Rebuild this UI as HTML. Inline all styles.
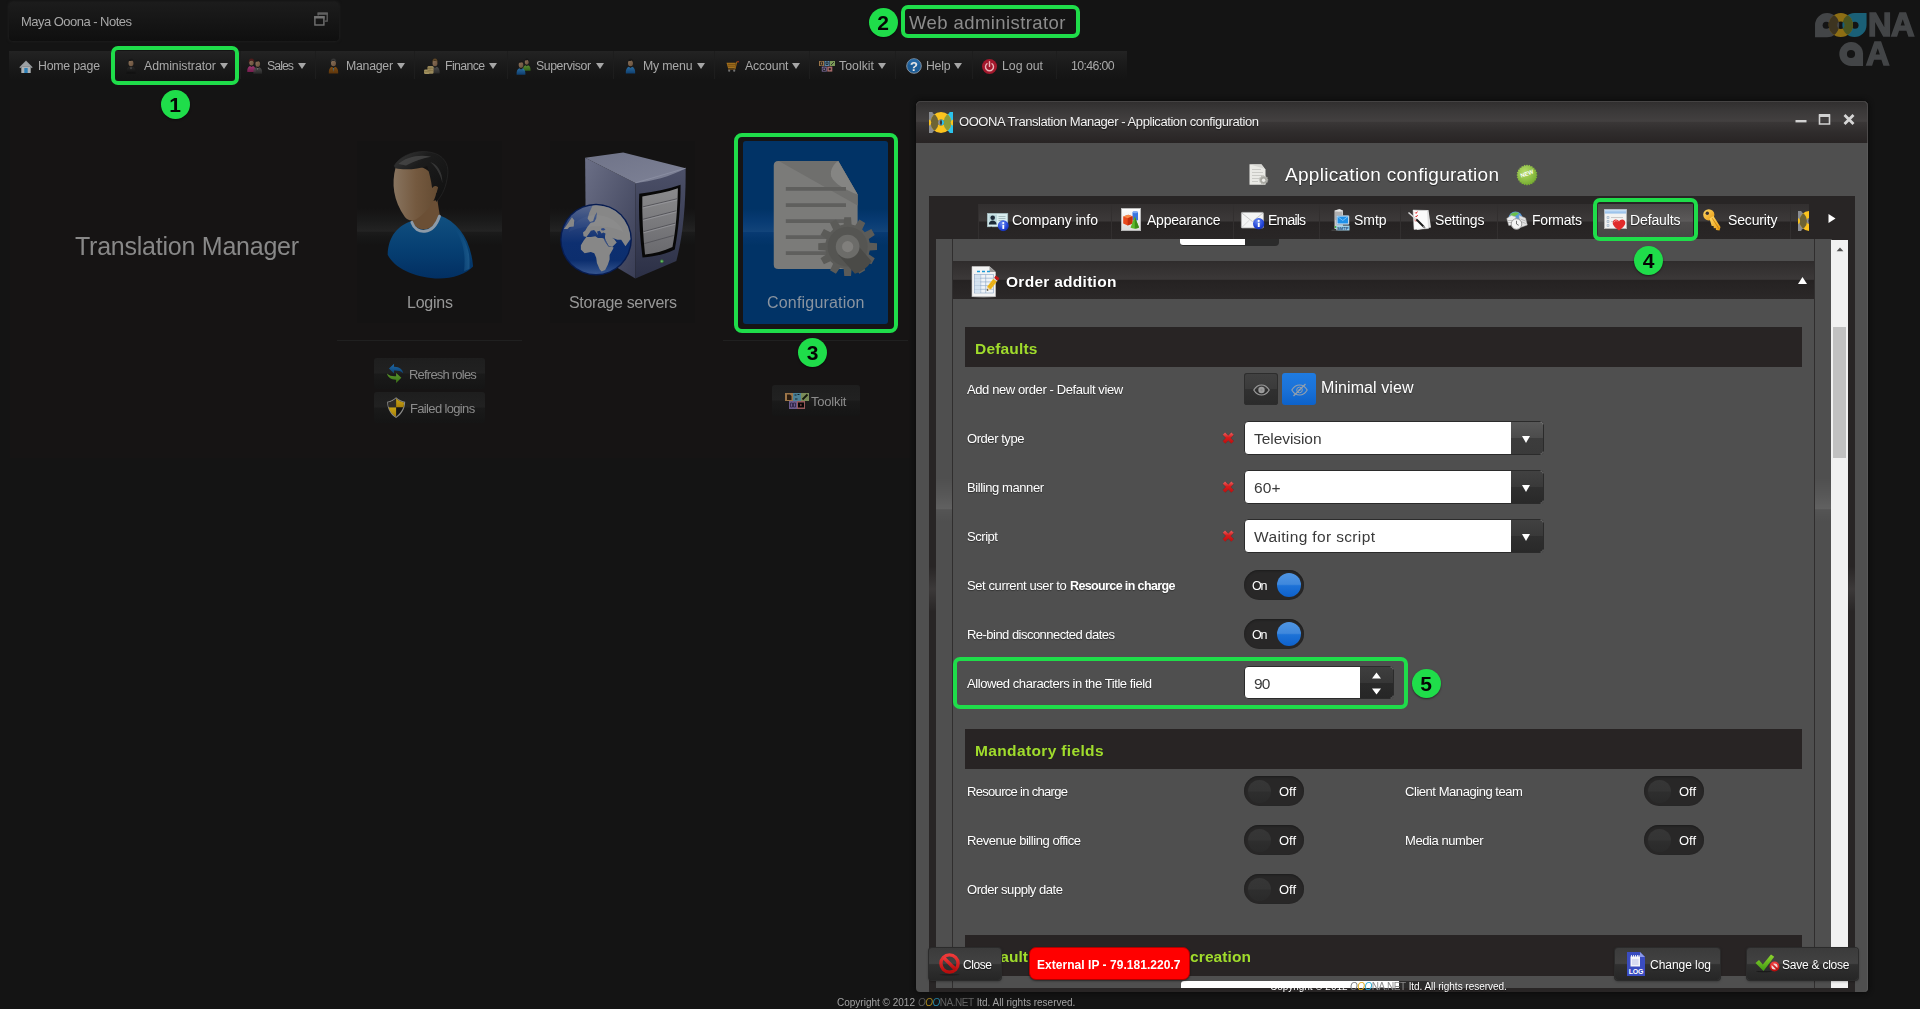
<!DOCTYPE html>
<html lang="en">
<head>
<meta charset="utf-8">
<title>Web administrator</title>
<style>
*{box-sizing:border-box;margin:0;padding:0}
html,body{width:1920px;height:1009px;overflow:hidden;background:#141414}
body{position:relative;font-family:"Liberation Sans",sans-serif}
.a,.tx,svg.i{position:absolute}
.a{z-index:1}
svg.i{z-index:4;overflow:visible}
svg.dm{opacity:.8}
.tx{white-space:pre;line-height:1;z-index:5;will-change:transform}
.hl{position:absolute;border:4px solid #1fdd4a;border-radius:7px;z-index:40}
.bd{position:absolute;width:29px;height:29px;border-radius:50%;background:#1fdd4a;color:#050505;font-weight:bold;font-size:21px;line-height:29px;text-align:center;z-index:41;box-shadow:0 1px 2px rgba(0,0,0,.5)}
.msep{position:absolute;top:51px;width:1px;height:28px;background:#1d1d1d;z-index:2}
.arr{position:absolute;top:63px;width:0;height:0;border-left:4px solid transparent;border-right:4px solid transparent;border-top:6.5px solid #a6a6a6;z-index:5}
.tile{position:absolute;top:141px;width:145px;height:182px;z-index:2;background:linear-gradient(#141313 0%,#141313 37%,#1b1b1b 44%,#232323 49.6%,#1b1b1b 50%,#171717 53%,#141313 57%,#141313 100%)}
.hr{position:absolute;height:1px;background:#202020;z-index:2}
.sb{position:absolute;background:linear-gradient(#1e1e1e 0%,#212121 48%,#1a1a1a 52%,#171717 80%,#151515 100%);border-radius:3px;z-index:2}
.tab{position:absolute;top:204px;height:35px;z-index:3;background:linear-gradient(#322f2f 0%,#3c3939 49%,#262323 51%,#292626 100%);border-left:1px solid #322f2f;border-right:1px solid #1f1d1d}
.sech{position:absolute;left:965px;width:837px;background:#282424;z-index:2}
.dd{position:absolute;left:1244px;width:300px;height:34px;border-radius:4px;background:#fff;border:1px solid #2b2b2b;overflow:hidden;z-index:3}
.dd i{position:absolute;right:0;top:0;width:32px;height:32px;background:linear-gradient(#414141,#393939 49%,#2f2f2f 51%,#292929)}
.dd i:after{content:"";position:absolute;left:11px;top:14px;border-left:4.5px solid transparent;border-right:4.5px solid transparent;border-top:7px solid #fff}
.dd.sp i:after{display:none}
.tg{position:absolute;width:60px;height:30px;border-radius:15px;background:#282727;z-index:3;box-shadow:inset 0 1px 2px #1c1c1c}
.tg b{position:absolute;top:3px;width:24px;height:24px;border-radius:50%}
.tg.on b{left:33px;background:linear-gradient(#4f95e3 0%,#3f88dc 47%,#1d72d7 53%,#0e61cb 100%)}
.tg.off b{left:4px;top:3.5px;width:23px;height:23px;background:linear-gradient(#363636 0%,#343434 49%,#2e2e2e 51%,#2a2a2a 100%)}
.btn{position:absolute;top:948px;height:32px;border-radius:3px;background:linear-gradient(#3b3b3b,#424242 48%,#303030 52%,#262626);box-shadow:0 0 0 1px #2b2b2b,0 1px 3px rgba(0,0,0,.5);z-index:30}
</style>
</head>

<body>
<!-- NOTES -->
<div class="a" style="left:9px;top:2px;width:330px;height:39px;border-radius:4px;background:linear-gradient(#1c1c1c,#151515 55%,#0f0f0f);box-shadow:0 0 3px #262626"></div>
<svg class="i" style="left:314px;top:12px" width="14" height="14" viewBox="0 0 14 14"><path d="M4.200 3.500V1.200h9v8h-2.400" fill="none" stroke="#606060" stroke-width="1.300"/><rect x="3.600" y="0.600" width="10.200" height="2.200" fill="#606060"/><rect x="0.900" y="4.800" width="9" height="8.200" fill="none" stroke="#727272" stroke-width="1.400"/><rect x="0.200" y="4.100" width="10.400" height="2.400" fill="#727272"/></svg>
<!-- MENU BAR -->
<div class="a" style="left:9px;top:51px;width:1118px;height:28px;background:linear-gradient(#232323,#1a1a1a 50%,#141414)"></div>
<i class="msep" style="left:240px"></i><i class="msep" style="left:315px"></i><i class="msep" style="left:414px"></i><i class="msep" style="left:507px"></i><i class="msep" style="left:613px"></i><i class="msep" style="left:714px"></i><i class="msep" style="left:809px"></i><i class="msep" style="left:895px"></i><i class="msep" style="left:972px"></i><i class="msep" style="left:1056px"></i><i class="msep" style="left:111px"></i>
<i class="arr" style="left:219.5px"></i><i class="arr" style="left:297.5px"></i><i class="arr" style="left:396.5px"></i><i class="arr" style="left:488.5px"></i><i class="arr" style="left:595.5px"></i><i class="arr" style="left:696.5px"></i><i class="arr" style="left:791.5px"></i><i class="arr" style="left:878px"></i><i class="arr" style="left:954px"></i>
<!-- MAIN PANEL -->
<div class="a" style="left:10px;top:100px;width:900px;height:358px;background:#161414"></div>
<div class="tile" style="left:357px"></div>
<div class="tile" style="left:550px"></div>
<div class="tile" style="left:743px;width:145px;height:183px;border-radius:3px;background:linear-gradient(#013366 0%,#013366 37%,#083b73 44%,#12447a 49.6%,#083a72 50%,#04366c 53%,#013366 57%,#013366 100%)"></div>
<i class="hr" style="left:337px;top:340px;width:185px"></i>
<i class="hr" style="left:723px;top:340px;width:185px"></i>
<div class="sb" style="left:374px;top:358px;width:111px;height:31px"></div>
<div class="sb" style="left:374px;top:392px;width:111px;height:31px"></div>
<div class="sb" style="left:772px;top:385px;width:88px;height:31px"></div>
<!-- HIGHLIGHTS -->
<div class="hl" style="left:111px;top:46px;width:128px;height:39px"></div>
<div class="bd" style="left:160.5px;top:89.5px">1</div>
<div class="hl" style="left:901px;top:5px;width:179px;height:33px"></div>
<div class="bd" style="left:868.5px;top:7.5px">2</div>
<div class="hl" style="left:734px;top:133px;width:164px;height:200px;border-radius:8px"></div>
<div class="bd" style="left:798px;top:338px">3</div>
<div class="hl" style="left:1593px;top:198px;width:105px;height:43px"></div>
<div class="bd" style="left:1634px;top:246px">4</div>
<div class="hl" style="left:953px;top:657px;width:455px;height:52px"></div>
<div class="bd" style="left:1411.5px;top:668.5px">5</div>

<!-- shared defs -->
<svg width="0" height="0" style="position:absolute">
<defs>
<linearGradient id="gSkin" x1="0" y1="0" x2="1" y2="1"><stop offset="0" stop-color="#a98a6c"/><stop offset="1" stop-color="#7c5d43"/></linearGradient>
<linearGradient id="gBlue" x1="0" y1="0" x2="0" y2="1"><stop offset="0" stop-color="#2f7fc0"/><stop offset="1" stop-color="#0d4a86"/></linearGradient>
<linearGradient id="gGreen" x1="0" y1="0" x2="0" y2="1"><stop offset="0" stop-color="#6aa83a"/><stop offset="1" stop-color="#3a7418"/></linearGradient>
<linearGradient id="gSuit" x1="0" y1="0" x2="0" y2="1"><stop offset="0" stop-color="#5a5a5a"/><stop offset="1" stop-color="#2c2c2c"/></linearGradient>
<linearGradient id="gDark" x1="0" y1="0" x2="0" y2="1"><stop offset="0" stop-color="#2c2c2c"/><stop offset="1" stop-color="#0c0c0c"/></linearGradient>
<linearGradient id="gPink" x1="0" y1="0" x2="0" y2="1"><stop offset="0" stop-color="#c0408a"/><stop offset="1" stop-color="#8a1c58"/></linearGradient>
<linearGradient id="gBrown" x1="0" y1="0" x2="0" y2="1"><stop offset="0" stop-color="#9a5c14"/><stop offset="1" stop-color="#6e3c08"/></linearGradient>
<!-- small person 12x16 : body uses currentColor via fill attr on use -->
<symbol id="pBody" viewBox="0 0 10 16"><path d="M0.300 15.600c-.300-3.800 1-6.200 3-6.800L5 10l1.700-1.200c2 .6 3.300 3 3 6.800z"/></symbol>
<symbol id="pHead" viewBox="0 0 10 16"><ellipse cx="5" cy="5" rx="2.500" ry="3.300" fill="url(#gSkin)"/><path d="M2.400 4.800c-.400-2.400.700-4.100 2.700-4.100 2 0 3 1.700 2.600 4.200-.300-1.200-.800-2-1.400-2.400-1.200.500-2.600.600-3.400.400-.200.500-.400 1.100-.500 1.900z" fill="#161616"/></symbol>
</defs>
</svg>
<!-- Home -->
<svg class="i" style="left:19px;top:59.5px" width="14" height="14" viewBox="0 0 14 14"><path d="M2.300 6.500h9.400v6.500H2.300z" fill="#aeb2b4"/><path d="M7 0.600L0.300 7.200l1 1L7 2.800l5.700 5.400 1-1z" fill="#8d9194"/><path d="M7 1.500L1.500 6.800h11z" fill="#9da1a4"/><rect x="5.300" y="8" width="3.400" height="5" fill="#2d7fb6"/></svg>
<!-- Administrator -->
<svg class="i dm" style="left:126px;top:57.500px" width="10" height="16"><use href="#pBody" fill="url(#gDark)"/><use href="#pHead"/><path d="M4.400 9.600L5 11.500l.6-1.900z" fill="#aaa"/></svg>
<!-- Sales -->
<svg class="i dm" style="left:246.500px;top:57.500px" width="9" height="14.500"><use href="#pBody" fill="url(#gPink)" width="9" height="14.500"/><use href="#pHead" width="9" height="14.500"/><path d="M1.800 5c-.500-2.800.600-4.600 2.700-4.600s3.200 1.800 2.700 4.600c-.300-1.400-1.300-2.500-2.700-2.500S2.100 3.600 1.800 5z" fill="#5c1c1c"/></svg>
<svg class="i dm" style="left:253px;top:59px" width="9.500" height="15"><use href="#pBody" fill="url(#gSuit)" width="9.500" height="15"/><use href="#pHead" width="9.500" height="15"/><path d="M4.200 9.200l.55 1.800.55-1.800z" fill="#bbb"/></svg>
<!-- Manager -->
<svg class="i dm" style="left:327.500px;top:57.500px" width="11" height="16"><use href="#pBody" fill="url(#gBrown)" width="11" height="16"/><use href="#pHead" width="11" height="16"/><path d="M5 10l.5 4 .5-4z" fill="#3a8ac0"/><path d="M2.700 4.800c-.400-2.500.800-4.200 2.800-4.200s3.200 1.700 2.800 4.200c-.500-1.600-1.500-2.400-2.800-2.400s-2.300.8-2.800 2.400z" fill="#3c3c3c"/></svg>
<!-- Finance -->
<svg class="i dm" style="left:430px;top:57.500px" width="10" height="16"><use href="#pBody" fill="url(#gSuit)"/><use href="#pHead"/><path d="M2.500 4.800c-.400-2.500.700-4.200 2.500-4.200s2.900 1.700 2.500 4.200c-.400-1.500-1.300-2.200-2.500-2.200s-2.100.7-2.500 2.200z" fill="#70522a"/></svg>
<svg class="i dm" style="left:423.500px;top:65.500px" width="10" height="8" viewBox="0 0 10 8"><rect x="3.500" y="0" width="6" height="7.800" rx="1.200" fill="#b5a068"/><rect x="0" y="3.600" width="5.500" height="4.400" rx="1.200" fill="#c9b474"/><path d="M3.500 2.300h6M3.500 4.600h6M0 5.800h5.500" stroke="#8a7640" stroke-width=".6"/></svg>
<!-- Supervisor -->
<svg class="i dm" style="left:522px;top:58px" width="9.500" height="13"><use href="#pBody" fill="url(#gGreen)" width="9.500" height="13"/><use href="#pHead" width="9.500" height="13"/></svg>
<svg class="i dm" style="left:516px;top:59.500px" width="10" height="15"><use href="#pBody" fill="url(#gBlue)" width="10" height="15"/><use href="#pHead" width="10" height="15"/></svg>
<!-- My menu -->
<svg class="i dm" style="left:625px;top:58px" width="11" height="16"><use href="#pBody" fill="url(#gBlue)" width="11" height="16"/><use href="#pHead" width="11" height="16"/></svg>
<!-- Account (cart) -->
<svg class="i dm" style="left:725.500px;top:60.500px" width="13" height="11" viewBox="0 0 13 11"><path d="M0.500 1.800h9.300L8.800 7H2z" fill="#c9881f"/><path d="M1.600 3.400h7.600M1.900 5.200h7" stroke="#7a4e0c" stroke-width=".7"/><path d="M12.500 0.500l-1.800.6L9 8H2" fill="none" stroke="#b57414" stroke-width="1.100"/><circle cx="3.200" cy="9.700" r="1.100" fill="#8a8a8a"/><circle cx="8.200" cy="9.700" r="1.100" fill="#8a8a8a"/><circle cx="12.200" cy="0.700" r=".8" fill="#c0281c"/></svg>
<!-- Toolkit -->
<svg class="i" style="left:819px;top:60.500px" width="16" height="11" viewBox="0 0 16 11"><rect x="0" y="0" width="5" height="5" fill="#9a7448"/><rect x="5.500" y="0" width="5" height="5" fill="#5a88a8"/><rect x="11" y="0" width="5" height="5" fill="#7c9a58"/><rect x="2.800" y="5.600" width="5" height="5" fill="#7a6a98"/><rect x="8.300" y="5.600" width="5" height="5" fill="#a86a6a"/><path d="M1.500 1h2v3h-2zM7 1h2v2.500H7zM12 4l3-3M4 7h2.500v2.500H4z" fill="none" stroke="#1c1c1c" stroke-width=".8"/><path d="M10.800 6.800l1.400 1.300-1.400 1.300-1.400-1.300z" fill="#1c1c1c"/></svg>
<!-- Help -->
<svg class="i" style="left:906px;top:58px" width="16" height="16" viewBox="0 0 16 16"><circle cx="8" cy="8" r="7.300" fill="#1c5c96" stroke="#8e9aa6" stroke-width=".9"/><path d="M1.800 6a6.300 6.300 0 0 1 12.400 0c-3 1.500-9.400 1.500-12.400 0z" fill="#2a6eae" opacity=".6"/></svg>
<span class="tx" style="left:910px;top:59.500px;font-size:13px;font-weight:bold;color:#e6e6e6;z-index:6">?</span>
<!-- Log out -->
<svg class="i" style="left:982px;top:58.500px" width="15" height="15" viewBox="0 0 15 15"><circle cx="7.500" cy="7.500" r="7.500" fill="#a2182c"/><path d="M5 4.700a4 4 0 1 0 5 0" fill="none" stroke="#e8b4b8" stroke-width="1.400" stroke-linecap="round"/><path d="M7.500 2.800v4.600" stroke="#e8b4b8" stroke-width="1.400" stroke-linecap="round"/></svg>
<!-- BIG USER ICON -->
<svg class="i" style="left:350px;top:135px;z-index:3" width="160" height="195" viewBox="0 0 828 1009">
<defs>
<linearGradient id="uB" x1="0" y1="0" x2="0" y2="1"><stop offset="0" stop-color="#115080"/><stop offset=".55" stop-color="#063f72"/><stop offset="1" stop-color="#022f62"/></linearGradient>
<linearGradient id="uF" x1="0" y1="0" x2="1" y2="0"><stop offset="0" stop-color="#88745f"/><stop offset=".5" stop-color="#74593f"/><stop offset="1" stop-color="#634a31"/></linearGradient>
<linearGradient id="uH" x1="0" y1="0" x2="1" y2="1"><stop offset="0" stop-color="#3a3a3a"/><stop offset=".35" stop-color="#1c1c1c"/><stop offset="1" stop-color="#101010"/></linearGradient>
<linearGradient id="uR" x1="0" y1="0" x2="1" y2="0"><stop offset="0" stop-color="#0a4a80" stop-opacity="0"/><stop offset=".9" stop-color="#2a6c9c" stop-opacity=".55"/><stop offset="1" stop-color="#0a4070" stop-opacity="0"/></linearGradient>
</defs>
<path d="M195 620C198 520 250 470 318 445C345 505 425 510 462 415C560 450 625 540 637 680C600 720 520 747 440 742C330 735 230 690 195 620Z" fill="url(#uB)"/>
<path d="M530 470C590 510 620 590 625 690L590 705C600 610 585 540 530 470Z" fill="url(#uR)"/>
<path d="M316 438L335 370L452 335L464 412C430 512 342 506 316 438Z" fill="#6b4f35"/>
<path d="M320 452C342 518 430 520 463 420" fill="none" stroke="#8c9aa8" stroke-width="15" stroke-linecap="round"/>
<path d="M236 168C214 250 224 340 284 424C300 446 332 446 352 430C402 395 440 342 446 302C466 292 466 255 441 255C430 200 400 164 330 158Z" fill="url(#uF)"/>
<path d="M228 160C258 104 350 72 420 90C484 102 512 150 506 202C500 262 480 312 446 346C440 322 450 292 456 270C440 258 430 268 425 276C420 230 408 192 400 160C350 178 280 182 234 172Z" fill="url(#uH)"/><path d="M250 150C290 112 360 98 420 112C380 118 330 134 290 158Z" fill="#4a4a4a" opacity=".75"/><path d="M415 140C450 150 480 190 478 250C470 210 450 170 415 140Z" fill="#3c3c3c" opacity=".8"/><path d="M228 160C258 104 350 72 420 90C484 102 512 150 506 202C500 262 480 312 446 346" fill="none" stroke="#2c2c2c" stroke-width="3"/>
</svg>
<!-- BIG SERVER ICON -->
<svg class="i" style="left:543px;top:135px;z-index:3" width="160" height="195" viewBox="0 0 828 1009">
<defs>
<linearGradient id="sL" x1="0" y1="0" x2="1" y2="1"><stop offset="0" stop-color="#6b6f86"/><stop offset="1" stop-color="#3a3e56"/></linearGradient>
<linearGradient id="sF" x1="0" y1="0" x2="0" y2="1"><stop offset="0" stop-color="#4c5068"/><stop offset="1" stop-color="#2c3046"/></linearGradient>
<linearGradient id="sT" x1="0" y1="0" x2="1" y2="1"><stop offset="0" stop-color="#6f7388"/><stop offset="1" stop-color="#7e8296"/></linearGradient>
<linearGradient id="sBay" x1="0" y1="0" x2="0" y2="1"><stop offset="0" stop-color="#8a8a8c"/><stop offset="1" stop-color="#6a6a6e"/></linearGradient>
<radialGradient id="gl" cx=".45" cy=".3" r=".75"><stop offset="0" stop-color="#3a62a8"/><stop offset=".55" stop-color="#12357e"/><stop offset="1" stop-color="#06205c"/></radialGradient>
<clipPath id="glc"><circle cx="275" cy="542" r="176"/></clipPath>
</defs>
<path d="M218 118L478 248L478 742L222 590Z" fill="url(#sL)"/>
<path d="M478 248L738 172C740 350 725 520 690 652L478 742Z" fill="url(#sF)"/>
<path d="M218 118L415 90L738 172C660 215 560 240 478 248Z" fill="url(#sT)"/>
<path d="M478 248L738 172" stroke="#8a8ea2" stroke-width="5" fill="none"/>
<path d="M498 304C570 296 650 280 712 258C712 380 700 500 682 592C630 618 570 630 515 634C500 520 494 410 498 304Z" fill="#080808"/>
<path d="M514 318C580 308 640 296 698 276C696 380 688 490 670 580C625 602 575 614 528 618C518 520 512 420 514 318Z" fill="url(#sBay)"/>
<path d="M516 372L694 330M518 436L690 392M520 500L684 456M524 562L676 520" stroke="#55555a" stroke-width="5" fill="none"/>
<path d="M516 378L694 336M518 442L690 398M520 506L684 462" stroke="#a2a2a6" stroke-width="3" fill="none"/>
<circle cx="615" cy="653" r="9" fill="#3c8a3c"/><circle cx="615" cy="653" r="4" fill="#7cc47c"/>
<g transform="translate(62.100 310.500) scale(.4616)">
<defs>
<linearGradient id="gSea" x1="0" y1="0" x2="0" y2="1"><stop offset="0" stop-color="#56668c"/><stop offset=".3" stop-color="#27427c"/><stop offset=".55" stop-color="#0d2f70"/><stop offset=".8" stop-color="#0c2e6e"/><stop offset="1" stop-color="#34548e"/></linearGradient>
<clipPath id="gClip"><circle cx="460" cy="500" r="386"/></clipPath>
</defs>
<circle cx="460" cy="500" r="402" fill="#071c50"/>
<circle cx="460" cy="500" r="386" fill="url(#gSea)"/>
<g clip-path="url(#gClip)" fill="#878787">
<path d="M420 120L385 195 365 262 392 302 428 292 446 232 472 190 462 262 440 302 400 312 362 358 340 398 314 420 320 462 352 470 382 432 402 402 438 392 456 412 482 452 472 410 502 402 522 432 542 420 566 432 560 462 562 492 600 572 642 582 692 532 662 492 640 480 700 502 742 502 790 575 842 500 1000 500 1000 0 420 0Z"/>
<path d="M352 472L320 512 290 562 290 612 332 652 402 640 440 652 462 702 470 762 500 832 522 858 562 842 592 782 612 722 612 672 652 602 656 586 600 576 572 522 556 492 530 482 482 482 452 462 402 472Z"/>
<path d="M98 382L130 340 190 250 216 282 210 352 162 360 140 382Z"/>
</g>
<g clip-path="url(#gClip)" fill="#2a4684"><path d="M516 378L540 370 566 384 548 398 520 394Z"/><path d="M548 492L560 520 590 566 604 574 596 560 570 520 558 490Z"/></g>
<path d="M150 420A330 300 0 0 1 770 420C640 330 280 330 150 420Z" fill="#fff" opacity=".035" clip-path="url(#gClip)"/>
</g>
</svg>
<!-- BIG CONFIG ICON -->
<svg class="i" style="left:730px;top:128px;z-index:3" width="172" height="210" viewBox="0 0 826 1009">
<path d="M232 158H520L613 320V656Q613 678 591 678H232Q210 678 210 656V180Q210 158 232 158Z" fill="#7b7b79"/>
<path d="M232 158H520L613 320V372L236 160Z" fill="#6f6f6d"/>
<path d="M520 158L613 320C560 300 500 270 486 232C478 200 500 170 520 158Z" fill="#858583"/>
<path d="M268 293H557M268 370H557M268 447H557M268 524H470M268 601H470" stroke="#5f5f5d" stroke-width="18"/>
<path d="M671.3 550.9L706.1 553.7L706.1 586.3L671.3 589.1L666.6 606.6L695.3 626.4L679.0 654.7L647.5 639.7L634.7 652.5L649.7 684.0L621.4 700.3L601.6 671.6L584.1 676.3L581.3 711.1L548.7 711.1L545.9 676.3L528.4 671.6L508.6 700.3L480.3 684.0L495.3 652.5L482.5 639.7L451.0 654.7L434.7 626.4L463.4 606.6L458.7 589.1L423.9 586.3L423.9 553.7L458.7 550.9L463.4 533.4L434.7 513.6L451.0 485.3L482.5 500.3L495.3 487.5L480.3 456.0L508.6 439.7L528.4 468.4L545.9 463.7L548.7 428.9L581.3 428.9L584.1 463.7L601.6 468.4L621.4 439.7L649.7 456.0L634.7 487.5L647.5 500.3L679.0 485.3L695.3 513.6L666.6 533.4Z" fill="#5b5b58"/>
<circle cx="565" cy="570" r="96" fill="#555552"/>
<path d="M520 610L600 700A142 142 0 0 0 680 640L610 560Z" fill="#4a4a47"/>
<circle cx="565" cy="570" r="57" fill="#6c6c69"/>
<circle cx="565" cy="570" r="27" fill="#807f7c"/>
</svg>
<!-- SMALL BUTTON ICONS -->
<svg class="i" style="left:360px;top:350px;z-index:3" width="140" height="80" viewBox="0 0 1766 1009">
<defs>
<linearGradient id="rB" x1="0" y1="0" x2="0" y2="1"><stop offset="0" stop-color="#1f6aa8"/><stop offset="1" stop-color="#0c4274"/></linearGradient>
<linearGradient id="rG" x1="0" y1="0" x2="0" y2="1"><stop offset="0" stop-color="#5a9a2c"/><stop offset="1" stop-color="#3a7018"/></linearGradient>
<linearGradient id="shY" x1="0" y1="0" x2="0" y2="1"><stop offset="0" stop-color="#c9a416"/><stop offset="1" stop-color="#a8800a"/></linearGradient>
</defs>
<path d="M365 232L430 172L428 212C500 210 540 250 545 292C515 262 480 256 428 258L430 296Z" fill="url(#rB)"/>
<path d="M522 350L455 415L456 374C395 376 350 345 340 296C372 326 410 334 456 330L455 290Z" fill="url(#rG)"/>
<path d="M455 596C420 630 380 648 342 652C345 740 380 810 455 858C530 810 568 740 570 652C530 648 492 630 455 596Z" fill="#8a8a88"/>
<path d="M455 612C424 640 390 656 356 662C358 716 372 768 455 842Z" fill="#2a2a2a"/>
<path d="M455 612C486 640 522 656 556 662C554 716 540 768 455 842Z" fill="#141414"/>
<path d="M455 612C486 640 522 656 556 662C556 684 552 704 548 722H455Z" fill="url(#shY)"/>
<path d="M455 722H362C374 770 400 810 455 842Z" fill="url(#shY)"/>
<path d="M455 612C424 640 390 656 356 662C356 684 358 704 362 722H455Z" fill="#2e2c28"/>
</svg>
<svg class="i" style="left:785px;top:393px;z-index:3" width="24" height="16" viewBox="0 0 24 16">
<rect x="0" y="0" width="8" height="8" fill="#9c7548"/><rect x="8" y="0" width="8" height="8" fill="#4b8196"/><rect x="16" y="0" width="8" height="8" fill="#7a8c58"/><rect x="4" y="8" width="8" height="8" fill="#6c5c8c"/><rect x="12" y="8" width="8" height="8" fill="#96595a"/>
<path d="M2 1.500h3l1.500 1.500v4H2z" fill="#2a1c10"/><path d="M9.500 2h2M12.500 1.500h2M10 6h2.500" stroke="#10222a" stroke-width="1.200"/><path d="M17.500 6.500l5-5" stroke="#14180c" stroke-width="1.800"/><path d="M5.500 10h2v4h-2zM8.500 10h2v4h-2z" fill="none" stroke="#2a2040" stroke-width=".8"/><rect x="13" y="9.500" width="6" height="5" fill="#060606"/><path d="M15.200 10.800v2.400l2-1.200z" fill="#8a4a4a"/>
</svg>
<!-- LOGO -->
<svg class="i" style="left:1760px;top:0px;z-index:3" width="160" height="100" viewBox="0 0 1614 1009" role="img" aria-label="OOONA QA">
<title>OOONA QA</title>
<defs>
<clipPath id="lc1"><path d="M555 375V252A122 122 0 1 1 677 375Z"/></clipPath>
<clipPath id="lc3"><path d="M1075 130V252A122 122 0 1 1 953 130Z"/></clipPath>
<mask id="lm2"><rect width="1614" height="1009" fill="#fff"/><circle cx="815" cy="255" r="37" fill="#000"/></mask>
</defs>
<path d="M555 375V252A122 122 0 1 1 677 375Z" fill="#434547"/>
<path d="M1075 130V252A122 122 0 1 1 953 130Z" fill="#1a6077"/>
<circle cx="668" cy="255" r="36" fill="#141414"/>
<circle cx="958" cy="255" r="36" fill="#141414"/>
<g mask="url(#lm2)">
<circle cx="815" cy="252" r="122" fill="#8d6e14"/>
<circle cx="815" cy="252" r="122" fill="#3d3420" clip-path="url(#lc1)"/>
<circle cx="815" cy="252" r="122" fill="#4a5420" clip-path="url(#lc3)"/>
</g>
<circle cx="700" cy="255" r="12" fill="#8d6e14" opacity="0"/>
<path d="M1040 665V543A120 120 0 1 0 920 665Z" fill="#434547"/>
<circle cx="918" cy="545" r="41" fill="#141414"/>
</svg>

<!-- DIALOG FRAME -->
<div class="a" style="left:916px;top:101px;width:952px;height:891px;background:#4f4f4f;border-radius:5px 5px 4px 4px;box-shadow:0 0 5px 1px #0b0b0b,inset -1px 0 0 #5a5a5a"></div>
<div class="a" style="left:916px;top:101px;width:952px;height:42px;border-radius:5px 5px 0 0;background:linear-gradient(#302e2e 0%,#3b3939 25%,#434040 48.5%,#3a3737 50%,#2f2c2c 75%,#282424 100%);box-shadow:inset 0 1px 0 #454343,inset -1px 0 0 #4c4a4a"></div>
<!-- window buttons -->
<svg class="i" style="left:1795px;top:111.500px" width="62" height="14" viewBox="0 0 62 14"><rect x="0.5" y="8" width="11" height="2.4" fill="#d2d2d2"/><path d="M24.5 3h10v9h-10z" fill="none" stroke="#d2d2d2" stroke-width="1.6"/><rect x="24" y="2" width="11" height="3" fill="#d2d2d2"/><path d="M49.5 3l9 9M58.5 3l-9 9" stroke="#d6d6d6" stroke-width="2.800"/></svg>
<!-- inner dark panel -->
<div class="a" style="left:929px;top:196px;width:926px;height:796px;background:#282525"></div>
<!-- scroll viewport -->
<div class="a" style="left:936px;top:239px;width:896px;height:749px;background:#4f4f4f"></div>
<div class="a" style="left:952px;top:239px;width:1px;height:749px;background:#302e2e"></div>
<div class="a" style="left:1814px;top:239px;width:1px;height:749px;background:#302e2e"></div>
<!-- strip highlights -->
<div class="a" style="left:936px;top:478px;width:16px;height:44px;background:linear-gradient(rgba(255,255,255,0) 0%,rgba(255,255,255,.05) 40%,rgba(255,255,255,.10) 70%,rgba(255,255,255,.03) 72%,rgba(255,255,255,0) 100%);z-index:2"></div>
<div class="a" style="left:1815px;top:478px;width:16px;height:44px;background:linear-gradient(rgba(255,255,255,0) 0%,rgba(255,255,255,.05) 40%,rgba(255,255,255,.10) 70%,rgba(255,255,255,.03) 72%,rgba(255,255,255,0) 100%);z-index:2"></div>
<div class="a" style="left:929px;top:566px;width:7px;height:46px;background:linear-gradient(rgba(255,255,255,0),rgba(255,255,255,.09) 50%,rgba(255,255,255,0));z-index:2"></div>
<div class="a" style="left:1848px;top:566px;width:7px;height:46px;background:linear-gradient(rgba(255,255,255,0),rgba(255,255,255,.09) 50%,rgba(255,255,255,0));z-index:2"></div>
<!-- scrollbar -->
<div class="a" style="left:1831px;top:240px;width:17px;height:748px;background:#f1f1f1"></div>
<div class="a" style="left:1833px;top:327px;width:13px;height:131px;background:#c1c1c1"></div>
<svg class="i" style="left:1835.5px;top:247px" width="8" height="4.500" viewBox="0 0 9 6"><path d="M0 5.5L4.5 0.5 9 5.5z" fill="#505050"/></svg>
<!-- tabs -->
<div class="tab" style="left:978px;width:134px"></div>
<div class="tab" style="left:1111px;width:123px"></div>
<div class="tab" style="left:1233px;width:87px"></div>
<div class="tab" style="left:1319px;width:82px"></div>
<div class="tab" style="left:1400px;width:98px"></div>
<div class="tab" style="left:1497px;width:100px"></div>
<div class="tab" style="left:1597px;width:97px;background:linear-gradient(#4b4949 0%,#5c5a5a 49%,#4e4c4c 52%,#464444 100%)"></div>
<div class="tab" style="left:1694px;width:97px"></div>
<div class="tab" style="left:1790px;width:19px;border-right:0"></div>
<svg class="i" style="left:1828px;top:214px" width="8" height="9" viewBox="0 0 8 9"><path d="M0.5 0L7.5 4.5 0.5 9z" fill="#fff"/></svg>
<!-- leftover of previous dropdown at top -->
<div class="a" style="left:1180px;top:239px;width:99px;height:7px;border-radius:0 0 4px 4px;background:#2b2b2b;z-index:2"></div>
<div class="a" style="left:1180px;top:239px;width:65px;height:6px;border-radius:0 0 0 3px;background:#fff;z-index:2"></div>
<!-- Order addition header -->
<div class="a" style="left:953px;top:261px;width:861px;height:38px;background:linear-gradient(#2f2c2c 0%,#3b3838 48%,#252222 51%,#2b2828 100%);z-index:2"></div>
<svg class="i" style="left:1797.5px;top:276.5px" width="9" height="7" viewBox="0 0 9 7"><path d="M0 7L4.5 0 9 7z" fill="#fff"/></svg>
<!-- section headers -->
<div class="sech" style="top:327px;height:40px"></div>
<div class="sech" style="top:729px;height:40px"></div>
<div class="sech" style="top:935px;height:41px"></div>
<!-- default view buttons -->
<div class="a" style="left:1244px;top:373px;width:34px;height:32px;border-radius:3px;background:linear-gradient(#414141,#3b3b3b 49%,#303030 51%,#2b2b2b);box-shadow:inset 0 0 0 1px #2d2d2d;z-index:3"></div>
<div class="a" style="left:1282px;top:373px;width:34px;height:32px;border-radius:3px;background:linear-gradient(#1f7be0,#1a72d8 50%,#0d62ca);z-index:3"></div>
<!-- dropdowns -->
<div class="dd" style="top:421px"><i style="background:linear-gradient(#585858,#4c4c4c 49%,#3c3c3c 51%,#3a3a3a)"></i></div>
<div class="dd" style="top:470px"><i></i></div>
<div class="dd" style="top:519px"><i></i></div>
<!-- spinner -->
<div class="dd sp" style="top:665.5px;width:150px;height:33.5px"><i style="width:33px;background:linear-gradient(#3e3e3e,#363636 49%,#2a2a2a 51%,#262626)"></i></div>
<svg class="i" style="left:1372px;top:671.5px;z-index:6" width="9" height="23" viewBox="0 0 9 23"><rect x="-3" y="-2" width="15" height="27" fill="#2f2f2f" opacity="0"/><path d="M0 6.5L4.5 0.5 9 6.5zM0 16.5L4.5 22.5 9 16.5z" fill="#fff"/></svg>
<!-- toggles -->
<div class="tg on" style="left:1244px;top:570px"><b></b></div>
<div class="tg on" style="left:1244px;top:619px"><b></b></div>
<div class="tg off" style="left:1244px;top:776px"><b></b></div>
<div class="tg off" style="left:1244px;top:825px"><b></b></div>
<div class="tg off" style="left:1244px;top:874px"><b></b></div>
<div class="tg off" style="left:1644px;top:776px"><b></b></div>
<div class="tg off" style="left:1644px;top:825px"><b></b></div>
<!-- bottom dropdown leftover -->
<div class="a" style="left:1181px;top:981px;width:250px;height:7px;border-radius:4px 4px 0 0;background:#2b2b2b;z-index:6"></div>
<div class="a" style="left:1181px;top:981px;width:218px;height:7px;border-radius:3px 0 0 0;background:#fff;z-index:6"></div>
<!-- bottom buttons -->
<div class="btn" style="left:929px;width:72px"></div>
<div class="a" style="left:1028.5px;top:947px;width:161px;height:33px;border-radius:7px;background:#ff0000;border:1px solid #b00000;z-index:30;box-shadow:0 1px 2px rgba(0,0,0,.5)"></div>
<div class="btn" style="left:1615px;width:105px"></div>
<div class="btn" style="left:1747px;width:111px"></div>

<!-- DIALOG ICONS -->
<svg width="0" height="0" style="position:absolute"><defs>
<radialGradient id="iB" cx=".4" cy=".3" r=".8"><stop offset="0" stop-color="#6a8cf0"/><stop offset=".6" stop-color="#2546d8"/><stop offset="1" stop-color="#1228a0"/></radialGradient>
<linearGradient id="gX" gradientUnits="userSpaceOnUse" x1="0" y1="0" x2="0" y2="12"><stop offset="0" stop-color="#e66a6a"/><stop offset=".45" stop-color="#d81c1c"/><stop offset="1" stop-color="#b80e0e"/></linearGradient>
<linearGradient id="gNo" x1="0" y1="0" x2="0" y2="1"><stop offset="0" stop-color="#f03a3a"/><stop offset="1" stop-color="#b80c0c"/></linearGradient>
<linearGradient id="gChk" x1="0" y1="0" x2="0" y2="1"><stop offset="0" stop-color="#8ed62e"/><stop offset="1" stop-color="#3f9a12"/></linearGradient>
<linearGradient id="gKey" x1="0" y1="0" x2="1" y2="1"><stop offset="0" stop-color="#ffd866"/><stop offset="1" stop-color="#e89a10"/></linearGradient>
<linearGradient id="gPg" x1="0" y1="0" x2="0" y2="1"><stop offset="0" stop-color="#ffffff"/><stop offset="1" stop-color="#dcdcdc"/></linearGradient>
<symbol id="xRed" viewBox="0 0 12 12"><path d="M1.700 1.700l8.600 8.600M10.300 1.700l-8.600 8.600" stroke="#7a1010" stroke-width="4.200" opacity=".35"/><path d="M1.700 1.700l8.600 8.600M10.300 1.700l-8.600 8.600" stroke="url(#gX)" stroke-width="3.300"/></symbol>
<symbol id="infoBall" viewBox="0 0 12 12"><circle cx="6" cy="6" r="5.700" fill="url(#iB)"/><rect x="5.100" y="5" width="1.900" height="4.300" fill="#fff"/><circle cx="6" cy="3.200" r="1.100" fill="#fff"/></symbol>
</defs></svg>
<!-- title icon -->
<svg class="i" style="left:929px;top:111.500px" width="24" height="21" viewBox="0 0 24 21"><defs><clipPath id="tiC"><rect width="24" height="21"/></clipPath><clipPath id="tiL"><circle cx="-1" cy="10.500" r="10.500"/></clipPath><clipPath id="tiR"><circle cx="25" cy="10.500" r="10.500"/></clipPath></defs><g clip-path="url(#tiC)"><rect width="24" height="21" fill="#141414" opacity="0"/><circle cx="-1" cy="10.500" r="10.500" fill="#8a8d92"/><circle cx="25" cy="10.500" r="10.500" fill="#2cc3ec"/><rect x="0" y="0" width="2.500" height="21" fill="#8a8d92"/><rect x="21.500" y="0" width="2.500" height="21" fill="#2cc3ec"/><path d="M0 0h4L0 5zM0 21h4L0 16z" fill="#8a8d92"/><path d="M24 0h-4l4 5zM24 21h-4l4-5z" fill="#2cc3ec"/><circle cx="12" cy="10.500" r="10.500" fill="#fbc31e"/><circle cx="12" cy="10.500" r="10.500" fill="#6d6335" clip-path="url(#tiL)"/><circle cx="12" cy="10.500" r="10.500" fill="#8c9c38" clip-path="url(#tiR)"/><circle cx="-1" cy="10.500" r="3.200" fill="#fbc31e"/><circle cx="25" cy="10.500" r="3.200" fill="#fbc31e"/><circle cx="12" cy="10.500" r="3" fill="#3a3838"/><path d="M12 7.500a3 3 0 0 0 0 6a5 5 0 0 1 0-6z" fill="#8a8d92"/><path d="M12 7.500a3 3 0 0 1 0 6a5 5 0 0 0 0-6z" fill="#2cc3ec"/></g></svg>
<!-- app config icon -->
<svg class="i" style="left:1248.500px;top:163.500px" width="21" height="22" viewBox="0 0 21 22"><path d="M0.500 0.300h12l4 5.200v15.200h-16z" fill="#e9e9e5"/><path d="M2 0.800h10.500l3 4z" fill="#d6d6d2"/><path d="M3 5.500h9M3 8.500h11M3 11.500h11M3 14.500h8M3 17.500h6" stroke="#cacac6" stroke-width="1.100"/><g transform="translate(14.600 16.300)"><path d="M0-5.400l.9 1.300 1.500-.6.300 1.600 1.600.3-.6 1.500 1.300.9-1.300.9.600 1.500-1.600.3-.300 1.600-1.500-.6-.900 1.300-.900-1.300-1.500.6-.300-1.600-1.600-.3.600-1.500-1.300-.9 1.300-.9-.6-1.500 1.600-.3.300-1.600 1.500.6z" fill="#b9b9b3"/><circle r="3.300" fill="#a8a8a2"/><circle r="1.700" fill="#ecece8"/></g></svg>
<!-- NEW badge -->
<svg class="i" style="left:1517px;top:163.500px" width="20" height="20" viewBox="-11 -11 22 22"><defs><radialGradient id="nG" cx=".4" cy=".35" r=".7"><stop offset="0" stop-color="#b6dc6a"/><stop offset="1" stop-color="#6fa82a"/></radialGradient></defs><path id="nStar" d="M0-10.500l1.300 1.500 1.700-1.100.9 1.800 1.900-.6.400 2 2-.1-.1 2 2 .4-.6 1.900 1.800.9-1.100 1.700 1.500 1.300-1.500 1.300 1.100 1.700-1.800.9.600 1.900-2 .4.100 2-2-.1-.4 2-1.900-.6-.9 1.800-1.700-1.100-1.300 1.500-1.300-1.500-1.700 1.100-.9-1.800-1.900.6-.4-2-2 .1.100-2-2-.4.600-1.900-1.800-.9 1.100-1.700-1.500-1.300 1.500-1.300-1.100-1.700 1.800-.9-.6-1.900 2-.4-.1-2 2 .1.400-2 1.900.6.900-1.800 1.700 1.100z" fill="url(#nG)"/><text x="0" y="1.800" text-anchor="middle" font-family="Liberation Sans,sans-serif" font-size="6.400" font-weight="bold" fill="#fff" transform="rotate(-20)">NEW</text></svg>
<!-- tab: company info -->
<svg class="i" style="left:986.500px;top:212.500px" width="22" height="19" viewBox="0 0 22 19"><rect x="0.300" y="0.300" width="20.500" height="13.500" fill="#d9eef0" stroke="#9fb8bc" stroke-width=".6"/><rect x="1.500" y="1.500" width="8.500" height="10" fill="#bcd8dc"/><circle cx="5.700" cy="4.800" r="2.300" fill="#1c2a38"/><path d="M1.800 11.500c.3-3 2-4 3.900-4s3.600 1 3.900 4z" fill="#1c2a38"/><path d="M11.500 3.500h7M11.500 5.500h7M11.500 7.500h5" stroke="#9ab0b4" stroke-width=".8"/><rect x="3.500" y="13.800" width="1.500" height="1.700" fill="#222"/><use href="#infoBall" x="10.500" y="7" width="11.500" height="11.500"/></svg>
<!-- tab: appearance -->
<svg class="i" style="left:1121px;top:208px" width="20" height="23" viewBox="0 0 20 23"><rect x="0.400" y="0.400" width="19.200" height="22.200" fill="url(#gPg)" stroke="#bdbdbd" stroke-width=".8"/><rect x="11.500" y="3.500" width="5.500" height="9" rx="1.200" fill="#3a76e0"/><ellipse cx="14.250" cy="4.200" rx="2.750" ry="1" fill="#7aa8f4"/><path d="M2.200 8.500l5-1.800 4.300 1.500v7.300l-4.800 2-4.500-2z" fill="#e8481c"/><path d="M2.200 8.500l4.500 1.700 4.800-2-4.300-1.500z" fill="#f88a4a"/><path d="M6.700 10.200v7.300l4.800-2V8.200z" fill="#c6300e"/><path d="M13.800 8.500l4.200 11c-2 1.500-6.500 1.500-8.500 0z" fill="#5cb82c"/><path d="M13.800 8.500l4.200 11c-1 .7-2.500 1-4.200 1.100z" fill="#3c8c18"/></svg>
<!-- tab: emails -->
<svg class="i" style="left:1241px;top:211.500px" width="24" height="19" viewBox="0 0 24 19"><rect x="0.400" y="0.400" width="22" height="15.500" rx="1" fill="#f4f4f4" stroke="#b8b8b8" stroke-width=".8"/><path d="M0.800 1l10.600 8.500L22 1" fill="none" stroke="#c4c4c4" stroke-width=".9"/><path d="M0.800 15.500l7.700-7.500M22 15.500l-7.700-7.500" stroke="#d2d2d2" stroke-width=".8"/><use href="#infoBall" x="11.700" y="5.700" width="12" height="12"/></svg>
<!-- tab: smtp -->
<svg class="i" style="left:1331px;top:209px" width="19" height="22" viewBox="0 0 19 22"><path d="M3.500 1.500l5-1.200 3.500 1.200V20h-8.500z" fill="#c9c9c9"/><path d="M3.500 1.500l5-1.200 3.500 1.200-4 .9z" fill="#e6e6e6"/><path d="M4 4h7M4 6h7M4 8h7M4 10h7" stroke="#8e8e8e" stroke-width=".8"/><rect x="5.500" y="6.500" width="12.500" height="9" rx=".8" fill="#dfe9f2" stroke="#8aa2b8" stroke-width=".6"/><rect x="6.500" y="7.500" width="10.500" height="7" fill="#1e90e8"/><path d="M6.500 7.500l5.250 4 5.250-4" fill="none" stroke="#8accff" stroke-width=".8"/><rect x="5" y="16.500" width="13.500" height="5" fill="#9ed0e8"/><circle cx="4.500" cy="18" r=".9" fill="#3cb43c"/><text x="11.800" y="20.600" text-anchor="middle" font-family="Liberation Sans,sans-serif" font-size="4.200" font-weight="bold" fill="#1c4a78">SMTP</text><path d="M0.500 21.200h6" stroke="#555" stroke-width=".8"/></svg>
<!-- tab: settings -->
<svg class="i" style="left:1407.500px;top:208.500px" width="24" height="23" viewBox="0 0 24 23"><path d="M6.500 2.500l14-1.500 2.500 17.500-14 2.500z" fill="#e2e2e2"/><path d="M5 1l14.500.500 1 18-14.500 1z" fill="#fbfbfb" stroke="#cfcfcf" stroke-width=".5"/><path d="M7.300 3.500l.8.900 1.300-1.800M7.500 7l.8.900 1.300-1.800" fill="none" stroke="#e02020" stroke-width="1"/><rect x="7" y="10" width="2" height="2" fill="none" stroke="#c44" stroke-width=".6"/><path d="M0.500 3.500l13 11.500" stroke="#d8d8d8" stroke-width="1.600"/><path d="M9 11l6.500 6.500" stroke="#1a1a1a" stroke-width="2" stroke-linecap="round"/><path d="M15 17l2.300 2.200" stroke="#888" stroke-width="1.200"/></svg>
<!-- tab: formats -->
<svg class="i" style="left:1506px;top:211px" width="22" height="19" viewBox="0 0 22 19"><circle cx="9.500" cy="7.500" r="7" fill="#5a9ad8"/><path d="M4 4c2-2.500 6-3.500 9-2-1 2-4 2.500-5 4-1.500.500-3-.500-4-2z" fill="#6cc04a"/><path d="M0.800 7.500l4.500-3 4.500 1.500-1 7.500-6 1z" fill="#ededed" stroke="#bdbdbd" stroke-width=".5"/><path d="M13 4.500l6.500 2.500 1.800 7-7 2.500z" fill="#e2e2e2" stroke="#b4b4b4" stroke-width=".5"/><path d="M2 9.500h6M2 11.500h5.500M14.500 8l5 2M14.800 10.500l5 2" stroke="#aaa" stroke-width=".7"/><circle cx="10.500" cy="13" r="5.300" fill="#f4f4f4" stroke="#9c9c9c" stroke-width="1"/><path d="M10.500 9.800v3.200l2.200 1.300" fill="none" stroke="#666" stroke-width=".9"/></svg>
<!-- tab: defaults -->
<svg class="i" style="left:1603.500px;top:208.500px" width="24" height="22" viewBox="0 0 24 22"><rect x="0.400" y="0.400" width="22.200" height="19.200" fill="#f2f2f2" stroke="#b4b4b4" stroke-width=".8"/><rect x="0.800" y="0.800" width="21.400" height="3.800" fill="#9ec4ec"/><rect x="0.800" y="0.800" width="21.400" height="1.600" fill="#c4dcf4"/><path d="M3 7.500h2v2H3zM3 11.500h2v2H3zM3 15.500h2v2H3z" fill="#dfe7f0" stroke="#8aa0b8" stroke-width=".5"/><path d="M7 8.500h12M7 12.500h4" stroke="#c4c4c4" stroke-width=".9"/><path d="M15 21.500c-4.500-3.500-6.300-5.500-6.300-7.800 0-1.900 1.400-3.200 3.100-3.200 1.300 0 2.500.700 3.200 1.900.700-1.200 1.900-1.900 3.200-1.900 1.700 0 3.100 1.300 3.100 3.200 0 2.300-1.800 4.300-6.300 7.800z" fill="#e02a2a"/><path d="M10 13c.500-1.300 2-1.800 3.200-1" fill="none" stroke="#f4a0a0" stroke-width=".9" stroke-linecap="round"/></svg>
<!-- tab: security -->
<svg class="i" style="left:1703px;top:209px" width="18" height="22" viewBox="0 0 18 22"><circle cx="5.800" cy="5.800" r="5.600" fill="url(#gKey)"/><circle cx="4.300" cy="4.200" r="1.700" fill="#3a3232"/><path d="M6.500 9.500l4-2.500 7 11-1 3.500-3.500-.5-.3-2-1.900.2-.2-2.200-1.900.1z" fill="url(#gKey)"/><path d="M9.300 9.300l7 11" stroke="#c87c08" stroke-width=".8"/></svg>
<!-- tab: partial -->
<svg class="i" style="left:1798px;top:210.500px;overflow:hidden" width="11" height="20" viewBox="0 0 11.550 21"><defs><clipPath id="tjC"><rect width="24" height="21"/></clipPath><clipPath id="tjL"><circle cx="-1" cy="10.500" r="10.500"/></clipPath><clipPath id="tjR"><circle cx="25" cy="10.500" r="10.500"/></clipPath></defs><g clip-path="url(#tjC)"><rect width="24" height="21" fill="#141414" opacity="0"/><circle cx="-1" cy="10.500" r="10.500" fill="#8a8d92"/><circle cx="25" cy="10.500" r="10.500" fill="#2cc3ec"/><rect x="0" y="0" width="2.500" height="21" fill="#8a8d92"/><rect x="21.500" y="0" width="2.500" height="21" fill="#2cc3ec"/><path d="M0 0h4L0 5zM0 21h4L0 16z" fill="#8a8d92"/><path d="M24 0h-4l4 5zM24 21h-4l4-5z" fill="#2cc3ec"/><circle cx="12" cy="10.500" r="10.500" fill="#fbc31e"/><circle cx="12" cy="10.500" r="10.500" fill="#6d6335" clip-path="url(#tjL)"/><circle cx="12" cy="10.500" r="10.500" fill="#8c9c38" clip-path="url(#tjR)"/><circle cx="-1" cy="10.500" r="3.200" fill="#fbc31e"/><circle cx="25" cy="10.500" r="3.200" fill="#fbc31e"/><circle cx="12" cy="10.500" r="3" fill="#3a3838"/><path d="M12 7.500a3 3 0 0 0 0 6a5 5 0 0 1 0-6z" fill="#8a8d92"/><path d="M12 7.500a3 3 0 0 1 0 6a5 5 0 0 0 0-6z" fill="#2cc3ec"/></g></svg>
<!-- order addition icon -->
<svg class="i" style="left:971px;top:265.500px" width="28" height="32" viewBox="0 0 28 32"><ellipse cx="12.500" cy="30.500" rx="12.500" ry="1.200" fill="#8a8a8a" opacity=".7"/><path d="M1 0.500h17.500l6 5.500v24.500H1z" fill="#f3f3f3" stroke="#c9c9c9" stroke-width=".6"/><path d="M18.500 0.500l6 5.500h-6z" fill="#9a9a9a"/><path d="M6 5.500h3M11 5.500h3M16 5.500h3" stroke="#1e9ad6" stroke-width="1.700"/><rect x="3.500" y="8.500" width="19" height="18.500" fill="#f0f4f8" stroke="#8aa4c4" stroke-width=".6"/><path d="M3.500 12.200h19M3.500 15.900h19M3.500 19.600h19M3.500 23.300h19M9.700 8.500v18.500M14.700 8.500v18.500" stroke="#8aa4c4" stroke-width=".6"/><path d="M4 9h5.300v3H4zM4 12.700h5.300v2.800H4zM4 16.400h5.300v2.800H4zM4 20.100h5.300v2.800H4zM4 23.800h5.300v2.800H4z" fill="#d3e2f0"/><g transform="translate(15.800 24.800) rotate(-52)"><path d="M0 0l3.500-2.300v4.600z" fill="#f0d6a4"/><path d="M0 0l1.600-1v2z" fill="#1a1a1a"/><rect x="3.500" y="-2.300" width="10" height="4.600" fill="#efb91e"/><path d="M3.500-.8h10M3.500.8h10" stroke="#d49a10" stroke-width=".5"/><rect x="13.500" y="-2.300" width="1.200" height="4.600" fill="#d8d8d8"/><rect x="14.700" y="-2.300" width="3" height="4.600" rx=".8" fill="#c21414"/></g></svg>
<!-- eye icons -->
<svg class="i" style="left:1252.500px;top:384px;z-index:6" width="17" height="12" viewBox="0 0 17 12"><path d="M0.800 6C3 2.300 5.800 1 8.500 1s5.500 1.300 7.700 5c-2.200 3.700-5 5-7.700 5S3 9.700.8 6z" fill="none" stroke="#9c9c9c" stroke-width="1.200"/><circle cx="8.500" cy="6" r="3.200" fill="#9c9c9c"/><circle cx="8.500" cy="6" r="1.200" fill="#8a8a8a"/></svg>
<svg class="i" style="left:1290.500px;top:383px;z-index:6" width="17" height="14" viewBox="0 0 17 14"><path d="M0.800 7C3 3.300 5.800 2 8.500 2s5.500 1.300 7.700 5c-2.200 3.700-5 5-7.700 5S3 10.700.8 7z" fill="none" stroke="#93a0ae" stroke-width="1.100"/><circle cx="8.500" cy="7" r="2.800" fill="none" stroke="#93a0ae" stroke-width="1"/><circle cx="8.500" cy="7" r="1" fill="#93a0ae"/><path d="M2.500 13L14.500 1" stroke="#93a0ae" stroke-width="1.200"/></svg>
<!-- red X -->
<svg class="i" style="left:1222px;top:432px" width="12.500" height="12"><use href="#xRed" width="12.500" height="12"/></svg>
<svg class="i" style="left:1222px;top:481px" width="12.500" height="12"><use href="#xRed" width="12.500" height="12"/></svg>
<svg class="i" style="left:1222px;top:530px" width="12.500" height="12"><use href="#xRed" width="12.500" height="12"/></svg>
<!-- close icon -->
<svg class="i" style="left:938.500px;top:952.500px;z-index:31" width="21" height="23" viewBox="0 0 21 23"><ellipse cx="10.500" cy="21.800" rx="10" ry=".8" fill="#1a1a1a" opacity=".8"/><circle cx="10.500" cy="10.500" r="8.600" fill="none" stroke="url(#gNo)" stroke-width="3.400"/><path d="M4.700 4.700l11.600 11.600" stroke="url(#gNo)" stroke-width="3.400"/></svg>
<!-- change log icon -->
<svg class="i" style="left:1627px;top:952px;z-index:31" width="18" height="24" viewBox="0 0 18 24"><path d="M0 0h13l5 5v19H0z" fill="#3a4cc0"/><path d="M13 0l5 5h-5z" fill="#8a98e8"/><rect x="3.500" y="4.500" width="9.500" height="10" fill="#f4f4fa"/><path d="M4.500 3v2.500M6.500 3v2.500M8.500 3v2.500M10.500 3v2.500M12 3v2.500" stroke="#fff" stroke-width=".8"/><path d="M5 8h6.500M5 10h6.500M5 12h6.500" stroke="#b4bce8" stroke-width=".9"/><text x="9" y="22.300" text-anchor="middle" font-family="Liberation Sans,sans-serif" font-size="7" font-weight="bold" fill="#fff" letter-spacing="-.3">LOG</text></svg>
<!-- save & close icon -->
<svg class="i" style="left:1754.500px;top:954px;z-index:31" width="25" height="19" viewBox="0 0 25 19"><path d="M0.500 9l3.500-3 3.800 4.500L16 0.500l3.200 2.300L8.500 17z" fill="url(#gChk)"/><ellipse cx="9" cy="17.600" rx="8" ry=".7" fill="#111" opacity=".6"/><circle cx="19.500" cy="12.500" r="4" fill="#f2d6d6" stroke="url(#gNo)" stroke-width="1.900"/><path d="M16.800 9.800l5.400 5.400" stroke="url(#gNo)" stroke-width="1.900"/></svg>

<!-- TEXT -->
<span class="tx" style="left:21.0px;top:15.0px;font-size:13px;color:#a8a8a8;letter-spacing:-0.53px;">Maya Ooona - Notes</span>
<span class="tx" style="left:909.0px;top:14.0px;font-size:18.5px;color:#8c8c8c;letter-spacing:0.42px;">Web administrator</span>
<span class="tx" style="left:38.0px;top:60.0px;font-size:12.3px;color:#a9a9a9;letter-spacing:-0.20px;">Home page</span>
<span class="tx" style="left:144.0px;top:60.0px;font-size:12.3px;color:#a9a9a9;letter-spacing:-0.04px;">Administrator</span>
<span class="tx" style="left:267.0px;top:60.0px;font-size:12.3px;color:#a9a9a9;letter-spacing:-0.94px;">Sales</span>
<span class="tx" style="left:345.5px;top:60.0px;font-size:12.3px;color:#a9a9a9;letter-spacing:-0.26px;">Manager</span>
<span class="tx" style="left:444.5px;top:60.0px;font-size:12.3px;color:#a9a9a9;letter-spacing:-0.62px;">Finance</span>
<span class="tx" style="left:536.0px;top:60.0px;font-size:12.3px;color:#a9a9a9;letter-spacing:-0.42px;">Supervisor</span>
<span class="tx" style="left:643.0px;top:60.0px;font-size:12.3px;color:#a9a9a9;letter-spacing:-0.18px;">My menu</span>
<span class="tx" style="left:744.5px;top:60.0px;font-size:12.3px;color:#a9a9a9;letter-spacing:-0.16px;">Account</span>
<span class="tx" style="left:839.0px;top:60.0px;font-size:12.3px;color:#a9a9a9;letter-spacing:0.02px;">Toolkit</span>
<span class="tx" style="left:925.5px;top:60.0px;font-size:12.3px;color:#a9a9a9;letter-spacing:-0.27px;">Help</span>
<span class="tx" style="left:1002.0px;top:60.0px;font-size:12.3px;color:#a9a9a9;letter-spacing:-0.01px;">Log out</span>
<span class="tx" style="left:1070.5px;top:60.0px;font-size:12.3px;color:#a9a9a9;letter-spacing:-0.62px;">10:46:00</span>
<span class="tx" style="left:74.5px;top:234.0px;font-size:25px;color:#888888;letter-spacing:-0.24px;">Translation Manager</span>
<span class="tx" style="left:406.5px;top:295.0px;font-size:16px;color:#979797;letter-spacing:-0.23px;">Logins</span>
<span class="tx" style="left:568.5px;top:295.0px;font-size:16px;color:#979797;letter-spacing:-0.35px;">Storage servers</span>
<span class="tx" style="left:766.5px;top:295.0px;font-size:16px;color:#8a94a0;letter-spacing:0.19px;">Configuration</span>
<span class="tx" style="left:408.7px;top:368.0px;font-size:13px;color:#8c8c8c;letter-spacing:-0.79px;">Refresh roles</span>
<span class="tx" style="left:409.8px;top:402.0px;font-size:13px;color:#8c8c8c;letter-spacing:-0.65px;">Failed logins</span>
<span class="tx" style="left:811.0px;top:395.0px;font-size:13px;color:#8c8c8c;letter-spacing:-0.23px;">Toolkit</span>
<span class="tx" style="left:837.0px;top:998.0px;font-size:10px;color:#a2a2a2;letter-spacing:0.00px;">Copyright © 2012</span>
<span class="tx" style="left:918.0px;top:998.0px;font-size:10px;color:#626262;letter-spacing:-0.50px;"><i style="color:#5c5c5c">O</i><i style="color:#a8871c">O</i><i style="color:#2583a3">O</i>NA.NET</span>
<span class="tx" style="left:976.7px;top:998.0px;font-size:10px;color:#a2a2a2;letter-spacing:-0.00px;">ltd. All rights reserved.</span>
<span class="tx" style="left:959.0px;top:115.0px;font-size:13px;color:#f2f2f2;letter-spacing:-0.43px;text-shadow:0 1px 1px rgba(0,0,0,.55);">OOONA Translation Manager - Application configuration</span>
<span class="tx" style="left:1285.0px;top:165.0px;font-size:19px;color:#fff;letter-spacing:0.29px;text-shadow:0 1px 1px rgba(0,0,0,.55);">Application configuration</span>
<span class="tx" style="left:1012.0px;top:213.0px;font-size:14px;color:#fff;letter-spacing:-0.04px;text-shadow:0 1px 1px rgba(0,0,0,.55);">Company info</span>
<span class="tx" style="left:1146.5px;top:213.0px;font-size:14px;color:#fff;letter-spacing:-0.22px;text-shadow:0 1px 1px rgba(0,0,0,.55);">Appearance</span>
<span class="tx" style="left:1268.0px;top:213.0px;font-size:14px;color:#fff;letter-spacing:-0.80px;text-shadow:0 1px 1px rgba(0,0,0,.55);">Emails</span>
<span class="tx" style="left:1354.0px;top:213.0px;font-size:14px;color:#fff;letter-spacing:-0.06px;text-shadow:0 1px 1px rgba(0,0,0,.55);">Smtp</span>
<span class="tx" style="left:1434.5px;top:213.0px;font-size:14px;color:#fff;letter-spacing:-0.16px;text-shadow:0 1px 1px rgba(0,0,0,.55);">Settings</span>
<span class="tx" style="left:1532.0px;top:213.0px;font-size:14px;color:#fff;letter-spacing:-0.22px;text-shadow:0 1px 1px rgba(0,0,0,.55);">Formats</span>
<span class="tx" style="left:1629.5px;top:213.0px;font-size:14px;color:#fff;letter-spacing:-0.12px;text-shadow:0 1px 1px rgba(0,0,0,.55);">Defaults</span>
<span class="tx" style="left:1727.5px;top:213.0px;font-size:14px;color:#fff;letter-spacing:-0.15px;text-shadow:0 1px 1px rgba(0,0,0,.55);">Security</span>
<span class="tx" style="left:1005.5px;top:274.0px;font-size:15.5px;font-weight:bold;color:#fff;letter-spacing:0.28px;text-shadow:0 1px 1px rgba(0,0,0,.55);">Order addition</span>
<span class="tx" style="left:975.0px;top:341.0px;font-size:15.5px;font-weight:bold;color:#a0dc2c;letter-spacing:0.19px;">Defaults</span>
<span class="tx" style="left:975.0px;top:743.0px;font-size:15.5px;font-weight:bold;color:#a0dc2c;letter-spacing:0.36px;">Mandatory fields</span>
<span class="tx" style="left:975.0px;top:949.0px;font-size:15.5px;font-weight:bold;color:#a0dc2c;letter-spacing:0.08px;">Default values for new order creation</span>
<span class="tx" style="left:967.0px;top:383.0px;font-size:13px;color:#fff;letter-spacing:-0.40px;text-shadow:0 1px 1px rgba(0,0,0,.4);">Add new order - Default view</span>
<span class="tx" style="left:1320.5px;top:380.0px;font-size:16px;color:#fff;letter-spacing:0.08px;text-shadow:0 1px 1px rgba(0,0,0,.4);">Minimal view</span>
<span class="tx" style="left:967.0px;top:432.0px;font-size:13px;color:#fff;letter-spacing:-0.44px;text-shadow:0 1px 1px rgba(0,0,0,.4);">Order type</span>
<span class="tx" style="left:967.0px;top:481.0px;font-size:13px;color:#fff;letter-spacing:-0.41px;text-shadow:0 1px 1px rgba(0,0,0,.4);">Billing manner</span>
<span class="tx" style="left:967.0px;top:530.0px;font-size:13px;color:#fff;letter-spacing:-0.45px;text-shadow:0 1px 1px rgba(0,0,0,.4);">Script</span>
<span class="tx" style="left:967.0px;top:579.0px;font-size:13px;color:#fff;letter-spacing:-0.40px;text-shadow:0 1px 1px rgba(0,0,0,.4);">Set current user to </span>
<span class="tx" style="left:1069.5px;top:580.0px;font-size:12.5px;font-weight:bold;color:#fff;letter-spacing:-0.62px;text-shadow:0 1px 1px rgba(0,0,0,.4);">Resource in charge</span>
<span class="tx" style="left:967.0px;top:628.0px;font-size:13px;color:#fff;letter-spacing:-0.53px;text-shadow:0 1px 1px rgba(0,0,0,.4);">Re-bind disconnected dates</span>
<span class="tx" style="left:967.0px;top:677.0px;font-size:13px;color:#fff;letter-spacing:-0.42px;text-shadow:0 1px 1px rgba(0,0,0,.4);">Allowed characters in the Title field</span>
<span class="tx" style="left:967.0px;top:785.0px;font-size:13px;color:#fff;letter-spacing:-0.69px;text-shadow:0 1px 1px rgba(0,0,0,.4);">Resource in charge</span>
<span class="tx" style="left:967.0px;top:834.0px;font-size:13px;color:#fff;letter-spacing:-0.44px;text-shadow:0 1px 1px rgba(0,0,0,.4);">Revenue billing office</span>
<span class="tx" style="left:967.0px;top:883.0px;font-size:13px;color:#fff;letter-spacing:-0.46px;text-shadow:0 1px 1px rgba(0,0,0,.4);">Order supply date</span>
<span class="tx" style="left:1405.0px;top:785.0px;font-size:13px;color:#fff;letter-spacing:-0.45px;text-shadow:0 1px 1px rgba(0,0,0,.4);">Client Managing team</span>
<span class="tx" style="left:1405.0px;top:834.0px;font-size:13px;color:#fff;letter-spacing:-0.42px;text-shadow:0 1px 1px rgba(0,0,0,.4);">Media number</span>
<span class="tx" style="left:1254.0px;top:431.0px;font-size:15.5px;color:#3a3a3a;letter-spacing:-0.06px;">Television</span>
<span class="tx" style="left:1254.0px;top:480.0px;font-size:15.5px;color:#3a3a3a;letter-spacing:0.10px;">60+</span>
<span class="tx" style="left:1254.0px;top:529.0px;font-size:15.5px;color:#3a3a3a;letter-spacing:0.36px;">Waiting for script</span>
<span class="tx" style="left:1254.0px;top:676.0px;font-size:15.5px;color:#3a3a3a;letter-spacing:-0.75px;">90</span>
<span class="tx" style="left:1251.5px;top:580.0px;font-size:12.5px;color:#fff;letter-spacing:-1.19px;">On</span>
<span class="tx" style="left:1251.5px;top:629.0px;font-size:12.5px;color:#fff;letter-spacing:-1.19px;">On</span>
<span class="tx" style="left:1279.0px;top:785.0px;font-size:13px;color:#fff;letter-spacing:-0.05px;">Off</span>
<span class="tx" style="left:1279.0px;top:834.0px;font-size:13px;color:#fff;letter-spacing:-0.05px;">Off</span>
<span class="tx" style="left:1279.0px;top:883.0px;font-size:13px;color:#fff;letter-spacing:-0.05px;">Off</span>
<span class="tx" style="left:1679.0px;top:785.0px;font-size:13px;color:#fff;letter-spacing:-0.05px;">Off</span>
<span class="tx" style="left:1679.0px;top:834.0px;font-size:13px;color:#fff;letter-spacing:-0.05px;">Off</span>
<span class="tx" style="left:963.0px;top:959.0px;font-size:12px;color:#fff;letter-spacing:-0.42px;z-index:31;text-shadow:0 1px 1px rgba(0,0,0,.55);">Close</span>
<span class="tx" style="left:1037.0px;top:959.0px;font-size:12px;font-weight:bold;color:#fff;letter-spacing:0.04px;z-index:31;">External IP - 79.181.220.7</span>
<span class="tx" style="left:1650.0px;top:959.0px;font-size:12px;color:#fff;letter-spacing:-0.04px;z-index:31;text-shadow:0 1px 1px rgba(0,0,0,.55);">Change log</span>
<span class="tx" style="left:1781.5px;top:959.0px;font-size:12px;color:#fff;letter-spacing:-0.23px;z-index:31;text-shadow:0 1px 1px rgba(0,0,0,.55);">Save &amp; close</span>
<span class="tx" style="left:1269.5px;top:982.0px;font-size:10px;color:#fff;letter-spacing:-0.03px;z-index:7;">Copyright © 2012</span>
<span class="tx" style="left:1350.0px;top:982.0px;font-size:10px;color:#8c8c8c;letter-spacing:-0.50px;z-index:7;"><i style="color:#777">O</i><i style="color:#e0aa18">O</i><i style="color:#2aa7d0">O</i>NA.NET</span>
<span class="tx" style="left:1409.0px;top:982.0px;font-size:10px;color:#fff;letter-spacing:-0.02px;z-index:7;text-shadow:0 1px 1px rgba(0,0,0,.55);">ltd. All rights reserved.</span>
<span class="tx" style="left:1868.0px;top:9.0px;font-size:32.5px;font-weight:bold;color:#434547;letter-spacing:-0.45px;-webkit-text-stroke:1.6px #434547;">NA</span>
<span class="tx" style="left:1865.5px;top:38.0px;font-size:32.5px;font-weight:bold;color:#434547;letter-spacing:-1.48px;-webkit-text-stroke:1.6px #434547;">A</span>
</body>
</html>
